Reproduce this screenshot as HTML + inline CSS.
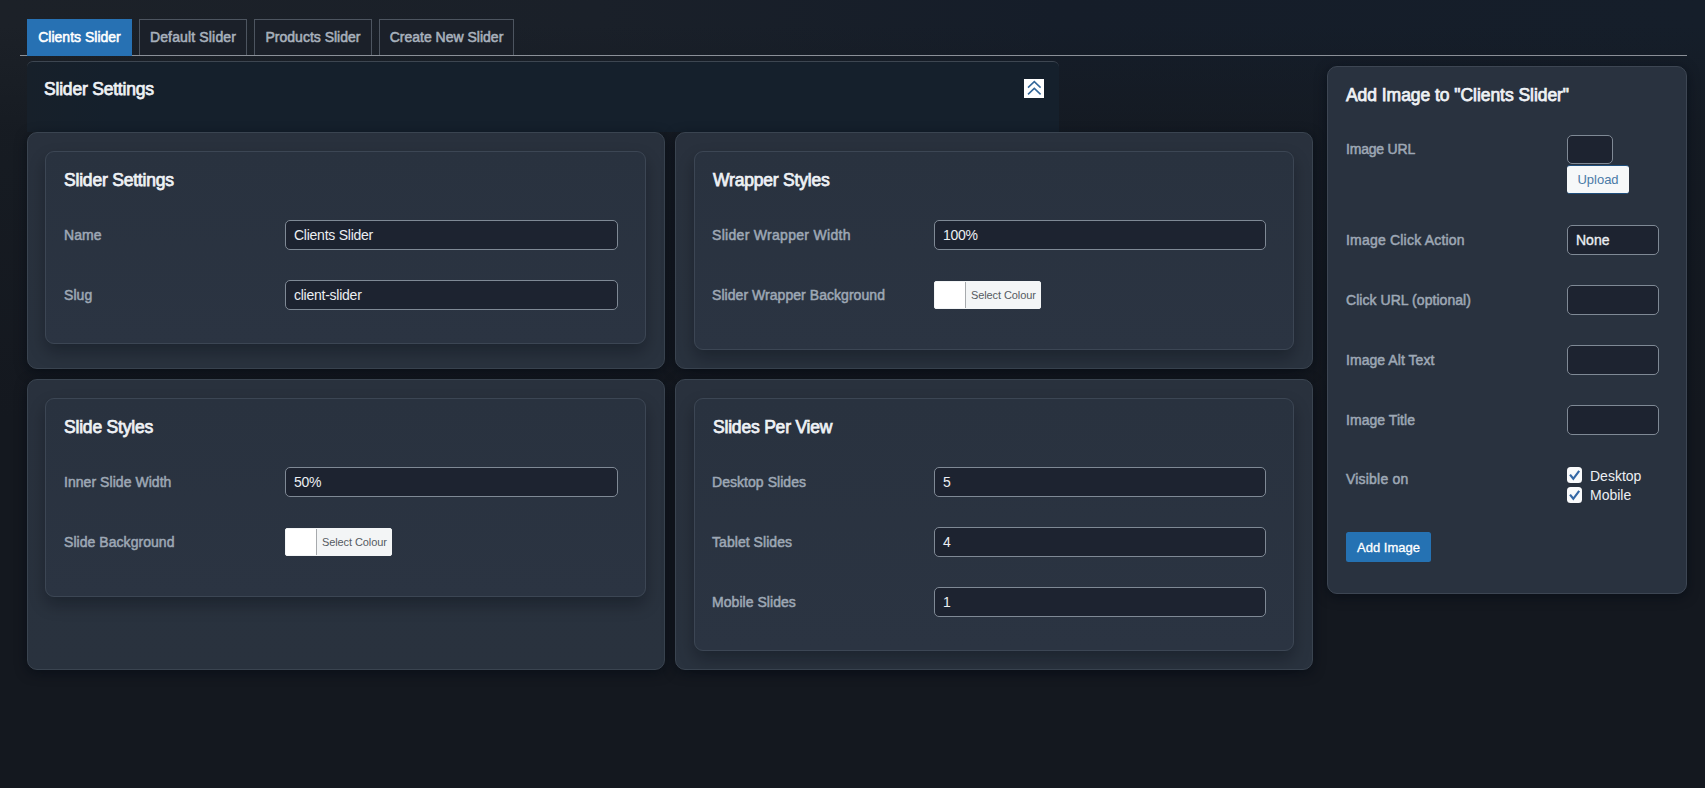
<!DOCTYPE html>
<html><head><meta charset="utf-8">
<style>
*{box-sizing:border-box;margin:0;padding:0}
html,body{width:1705px;height:788px;overflow:hidden}
body{position:relative;font-family:"Liberation Sans",sans-serif;background:linear-gradient(180deg,rgba(20,24,31,0) 0px,rgba(20,24,31,0) 25px,rgba(20,25,32,.7) 130px,#14181f 420px,#14181f 100%),linear-gradient(90deg,#1c2128 0%,#1a2029 35%,#151d29 62%,#151e2a 100%);}
.a{position:absolute}
.t{position:absolute;white-space:nowrap;line-height:1}
/* tabs */
.tabline{position:absolute;left:20px;top:55px;width:1667px;height:1px;background:#8b9098}
.tab{position:absolute;top:19px;height:36px;border:1px solid #4d5560;border-bottom:none;background:#1b2029;color:#a8b1bc;font-weight:normal;-webkit-text-stroke-width:0.55px;font-size:14px;letter-spacing:0px;line-height:35px;text-align:center}
.tab.on{background:#2771b3;border-color:#2771b3;color:#fff;height:37px}
/* top panel */
.panel{position:absolute;left:27px;top:61px;width:1032px;height:71px;background:linear-gradient(90deg,#17202a 0%,#15202c 8%,#15202c 100%);border-top:1px solid #3d4651;border-radius:6px 6px 0 0}
.h{position:absolute;white-space:nowrap;line-height:1;font-size:17.5px;font-weight:normal;-webkit-text-stroke-width:0.75px;color:#eef1f5;letter-spacing:-0.2px}
.card{position:absolute;background:linear-gradient(180deg,#29313d 0%,#29323e 100%);border:1px solid #3a4450;border-radius:10px;box-shadow:0 3px 12px rgba(4,10,20,.65)}
.inner{position:absolute;background:linear-gradient(180deg,#29323f 0%,#2b3442 100%);border:1px solid #3c4654;border-radius:9px;box-shadow:0 8px 16px rgba(0,5,12,.3)}
.lbl{position:absolute;white-space:nowrap;line-height:1;font-size:14px;font-weight:normal;-webkit-text-stroke-width:0.5px;color:#9ea8b5;letter-spacing:0.05px}
.inp{position:absolute;height:30px;background:#1d2330;border:1px solid #7f8995;border-radius:5px;color:#eceff3;font-size:14px;line-height:28px;padding-left:8px;white-space:nowrap;letter-spacing:-0.25px}
.cp{position:absolute;width:107px;height:28px;background:#f3f5f6;border:1px solid #f3f5f6;border-radius:2px;overflow:hidden}
.cp .sw{position:absolute;left:-1px;top:-1px;width:32px;height:28px;background:#fff;border-right:1px solid #a7aaad}
.cp .tx{position:absolute;left:36px;top:0;line-height:26px;font-size:11px;color:#555b62;white-space:nowrap;letter-spacing:-0.1px}
.rp{position:absolute;left:1327px;top:66px;width:360px;height:528px;background:#29323f;border:1px solid #3d4653;border-radius:10px;box-shadow:0 3px 12px rgba(4,10,20,.6)}
.sinp{position:absolute;height:30px;background:#1d2330;border:1px solid #7f8995;border-radius:5px}
.cb{position:absolute;width:15px;height:15.5px;background:#f9fafb;border-radius:3.5px}
</style></head><body>

<!-- tabs -->
<div class="tabline"></div>
<div class="tab on" style="left:27px;width:105px">Clients Slider</div>
<div class="tab" style="left:139px;width:108px;letter-spacing:0.15px">Default Slider</div>
<div class="tab" style="left:254px;width:118px">Products Slider</div>
<div class="tab" style="left:379px;width:135px">Create New Slider</div>

<!-- top panel -->
<div class="panel"></div>
<div class="h" style="left:44px;top:81px">Slider Settings</div>
<div class="a" style="left:1024px;top:79px;width:20px;height:19px;background:#fff">
 <svg width="20" height="19" viewBox="0 0 20 19"><path d="M4 8.6 L10.3 2.6 L16.6 8.6 M4 15.4 L10.3 9.4 L16.6 15.4" fill="none" stroke="#33679a" stroke-width="1.5"/></svg>
</div>

<!-- card 1 -->
<div class="card" style="left:27px;top:132px;width:638px;height:237px"></div>
<div class="inner" style="left:45px;top:151px;width:601px;height:193px"></div>
<div class="h" style="left:64px;top:172px">Slider Settings</div>
<div class="lbl" style="left:64px;top:228px">Name</div>
<div class="inp" style="left:285px;top:220px;width:333px">Clients Slider</div>
<div class="lbl" style="left:64px;top:288px">Slug</div>
<div class="inp" style="left:285px;top:280px;width:333px">client-slider</div>

<!-- card 2 -->
<div class="card" style="left:675px;top:132px;width:638px;height:237px"></div>
<div class="inner" style="left:694px;top:151px;width:600px;height:199px"></div>
<div class="h" style="left:713px;top:172px">Wrapper Styles</div>
<div class="lbl" style="left:712px;top:228px;letter-spacing:0.3px">Slider Wrapper Width</div>
<div class="inp" style="left:934px;top:220px;width:332px">100%</div>
<div class="lbl" style="left:712px;top:288px">Slider Wrapper Background</div>
<div class="cp" style="left:934px;top:281px"><div class="sw"></div><div class="tx">Select Colour</div></div>

<!-- card 3 -->
<div class="card" style="left:27px;top:379px;width:638px;height:291px"></div>
<div class="inner" style="left:45px;top:398px;width:601px;height:199px"></div>
<div class="h" style="left:64px;top:419px">Slide Styles</div>
<div class="lbl" style="left:64px;top:475px">Inner Slide Width</div>
<div class="inp" style="left:285px;top:467px;width:333px">50%</div>
<div class="lbl" style="left:64px;top:535px">Slide Background</div>
<div class="cp" style="left:285px;top:528px"><div class="sw"></div><div class="tx">Select Colour</div></div>

<!-- card 4 -->
<div class="card" style="left:675px;top:379px;width:638px;height:291px"></div>
<div class="inner" style="left:694px;top:398px;width:600px;height:253px"></div>
<div class="h" style="left:713px;top:419px">Slides Per View</div>
<div class="lbl" style="left:712px;top:475px">Desktop Slides</div>
<div class="inp" style="left:934px;top:467px;width:332px">5</div>
<div class="lbl" style="left:712px;top:535px">Tablet Slides</div>
<div class="inp" style="left:934px;top:527px;width:332px">4</div>
<div class="lbl" style="left:712px;top:595px">Mobile Slides</div>
<div class="inp" style="left:934px;top:587px;width:332px">1</div>

<!-- right panel -->
<div class="rp"></div>
<div class="h" style="left:1346px;top:87px;letter-spacing:-0.05px">Add Image to "Clients Slider"</div>
<div class="lbl" style="left:1346px;top:142px;letter-spacing:-0.2px">Image URL</div>
<div class="sinp" style="left:1567px;top:135px;width:46px;height:29px"></div>
<div class="a" style="left:1567px;top:165px;width:62px;height:29px;background:#f6f8f9;border-top:1px solid #1f4f7d;border-bottom:1px solid #1f4f7d;border-radius:3px;color:#4a7aa6;font-size:13px;line-height:27px;text-align:center">Upload</div>
<div class="lbl" style="left:1346px;top:233px;letter-spacing:0.2px">Image Click Action</div>
<div class="inp" style="left:1567px;top:225px;width:92px;-webkit-text-stroke-width:0.35px;letter-spacing:0px">None</div>
<div class="lbl" style="left:1346px;top:293px">Click URL (optional)</div>
<div class="sinp" style="left:1567px;top:285px;width:92px"></div>
<div class="lbl" style="left:1346px;top:353px">Image Alt Text</div>
<div class="sinp" style="left:1567px;top:345px;width:92px"></div>
<div class="lbl" style="left:1346px;top:413px">Image Title</div>
<div class="sinp" style="left:1567px;top:405px;width:92px"></div>
<div class="lbl" style="left:1346px;top:472px;letter-spacing:0.2px">Visible on</div>
<div class="cb" style="left:1567px;top:467px"><svg width="15" height="15" viewBox="0 0 15 15"><path d="M3 7.6 L6.3 11.8 L12.2 3.8" fill="none" stroke="#3568a5" stroke-width="2.2"/></svg></div>
<div class="t" style="left:1590px;top:469px;font-size:14px;color:#eceff3">Desktop</div>
<div class="cb" style="left:1567px;top:487px"><svg width="15" height="15" viewBox="0 0 15 15"><path d="M3 7.6 L6.3 11.8 L12.2 3.8" fill="none" stroke="#3568a5" stroke-width="2.2"/></svg></div>
<div class="t" style="left:1590px;top:488px;font-size:14px;color:#eceff3">Mobile</div>
<div class="a" style="left:1346px;top:532px;width:85px;height:30px;background:#2572b3;border-radius:2.5px;color:#fff;font-size:13px;line-height:31px;text-align:center;-webkit-text-stroke-width:0.3px">Add Image</div>

</body></html>
